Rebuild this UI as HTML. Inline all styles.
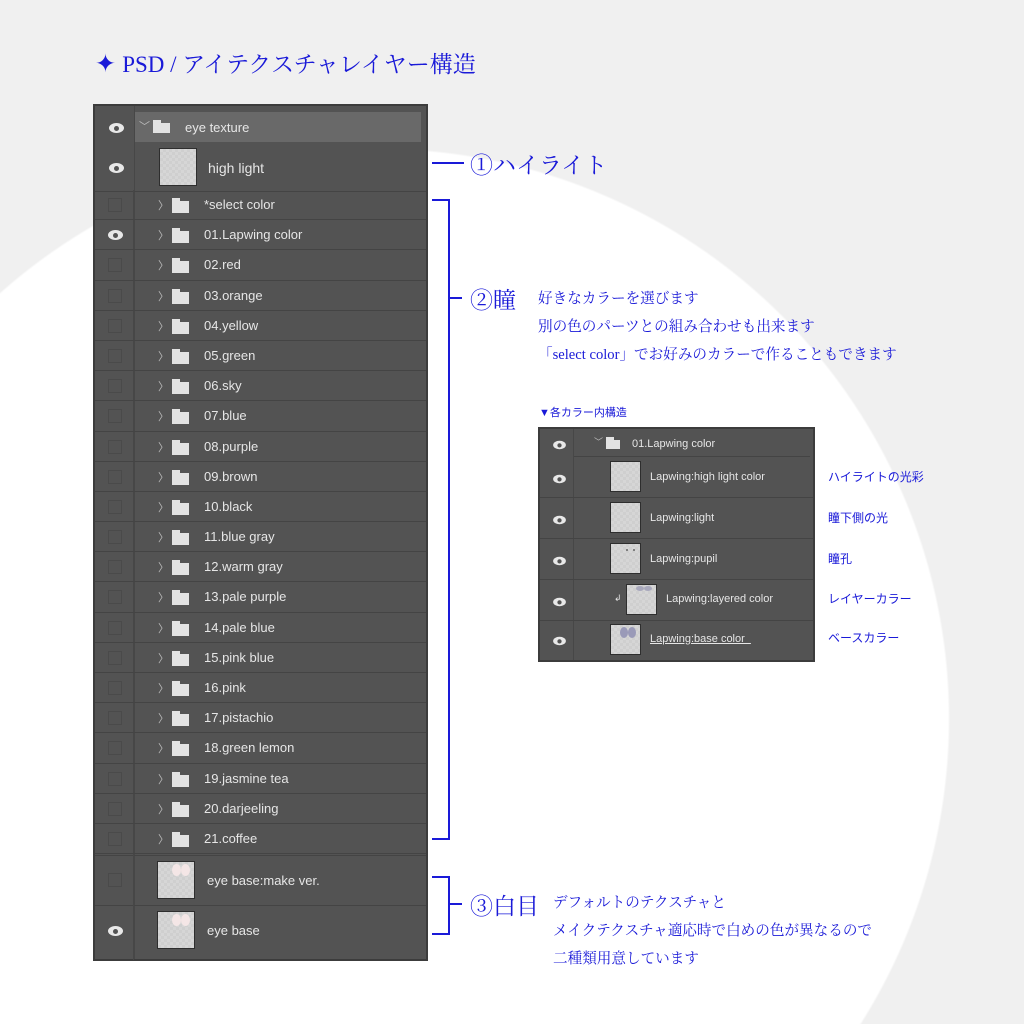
<!DOCTYPE html>
<html><head><meta charset="utf-8">
<style>
*{margin:0;padding:0;box-sizing:border-box}
html,body{width:1024px;height:1024px;overflow:hidden}
body{background:radial-gradient(circle 570px at 379px 719px,#fff 569px,#f0f0f0 571px);font-family:"Liberation Sans","Noto Sans CJK JP",sans-serif}
#wrap{position:relative;width:1024px;height:1024px;overflow:hidden}
.blue{color:#1a1ad8;font-family:"Liberation Serif","Noto Serif CJK JP",serif;position:absolute;white-space:nowrap}
.panel{position:absolute;background:#535353;border:2px solid #3c3c3c}
.row{position:absolute;left:0;right:0;border-bottom:1px solid #444}
.eyecol{position:absolute;left:0;top:0;bottom:0;border-right:1px solid #474747}
.txt{position:absolute;color:#e6e6e6;font-size:13px;white-space:nowrap}
.eye{position:absolute;width:15px;height:10px;border-radius:50%/50%;background:#e8e8e8}
.eye::after{content:"";position:absolute;left:5px;top:2.5px;width:5px;height:5px;border-radius:50%;background:#535353}
.box{position:absolute;width:14px;height:14px;border:1px solid #4a4a4a}
.chev{position:absolute;color:#bbb;font-size:11px}
.fold{position:absolute;width:17px;height:12px;background:#e2e2e2}
.fold::before{content:"";position:absolute;left:0;top:-3px;width:8px;height:3px;background:#e2e2e2}
.thumb{position:absolute;background:#d6d6d6;border:1px solid #2e2e2e;background-image:linear-gradient(45deg,#cfcfcf 25%,transparent 25%,transparent 75%,#cfcfcf 75%),linear-gradient(45deg,#cfcfcf 25%,transparent 25%,transparent 75%,#cfcfcf 75%);background-size:6px 6px;background-position:0 0,3px 3px}
.dot{position:absolute;border-radius:50%}
.ln{position:absolute;background:#1a1ad8}
.fr{position:relative;height:30.2px;border-bottom:1px solid #444}
.fr .box{left:13px;top:8px}
.fr .eye{left:13px;top:10px}
.fr .chev{left:63px;top:7px}
.fr .fold{left:77px;top:11px}
.fr .txt{left:109px;top:7px}
.sm{font-family:'Liberation Sans','Noto Sans CJK JP',sans-serif;font-size:12px}
</style></head><body><div id="wrap">

<div class="blue" style="left:95px;top:46px;font-size:25px;">✦ <span style="font-size:23px">PSD / アイテクスチャレイヤー構造</span></div>

<div class="panel" style="left:93px;top:104px;width:335px;height:857px;">
  <div class="eyecol" style="width:40px"></div>
  <div class="row" style="top:6px;height:30px;left:40px;right:5px;background:#696969;border:none"></div>
  <div class="eye" style="left:14px;top:17px"></div>
  <div class="chev" style="left:44px;top:12px">﹀</div>
  <div class="fold" style="left:58px;top:17px;height:10px"></div>
  <div class="txt" style="left:90px;top:14px">eye texture</div>
  <div class="row" style="top:36px;height:50px"></div>
  <div class="eye" style="left:14px;top:57px"></div>
  <div class="thumb" style="left:64px;top:42px;width:38px;height:38px"></div>
  <div class="txt" style="left:113px;top:54px;font-size:14px">high light</div>
</div>

<div style="position:absolute;left:95px;top:855px;width:331px;height:1px;background:#444"></div>
<div style="position:absolute;left:95px;top:905px;width:331px;height:1px;background:#444"></div>
<div class="box" style="left:108px;top:873px"></div>
<div class="thumb" style="left:157px;top:861px;width:38px;height:38px"></div>
<div class="dot" style="left:172px;top:864px;width:9px;height:12px;background:#f4e6e6"></div>
<div class="dot" style="left:181px;top:864px;width:9px;height:12px;background:#f4e6e6"></div>
<div class="txt" style="left:207px;top:873px">eye base:make ver.</div>
<div class="eye" style="left:108px;top:926px"></div>
<div class="thumb" style="left:157px;top:911px;width:38px;height:38px"></div>
<div class="dot" style="left:172px;top:914px;width:9px;height:12px;background:#f4e6e6"></div>
<div class="dot" style="left:181px;top:914px;width:9px;height:12px;background:#f4e6e6"></div>
<div class="txt" style="left:207px;top:923px">eye base</div>

<div class="ln" style="left:432px;top:162px;width:32px;height:2px"></div>
<div class="blue" style="left:470px;top:147px;font-size:23px">①ハイライト</div>

<div class="ln" style="left:432px;top:199px;width:18px;height:2px"></div>
<div class="ln" style="left:448px;top:199px;width:2px;height:641px"></div>
<div class="ln" style="left:432px;top:838px;width:18px;height:2px"></div>
<div class="ln" style="left:448px;top:297px;width:14px;height:2px"></div>
<div class="blue" style="left:470px;top:282px;font-size:23px">②瞳</div>
<div class="blue" style="left:538px;top:285px;font-size:14.6px;line-height:28px">好きなカラーを選びます<br>別の色のパーツとの組み合わせも出来ます<br>「select color」でお好みのカラーで作ることもできます</div>

<div class="ln" style="left:432px;top:876px;width:18px;height:2px"></div>
<div class="ln" style="left:448px;top:876px;width:2px;height:59px"></div>
<div class="ln" style="left:432px;top:933px;width:18px;height:2px"></div>
<div class="ln" style="left:448px;top:903px;width:14px;height:2px"></div>
<div class="blue" style="left:470px;top:888px;font-size:23px">③白目</div>
<div class="blue" style="left:553px;top:889px;font-size:14.6px;line-height:28px">デフォルトのテクスチャと<br>メイクテクスチャ適応時で白めの色が異なるので<br>二種類用意しています</div>

<div class="blue sm" style="left:539px;top:404px;font-size:11px">▼各カラー内構造</div>

<div class="panel" style="left:538px;top:427px;width:277px;height:235px;">
  <div class="eyecol" style="width:34px"></div>
  <div class="row" style="top:0;height:28px;left:34px;right:3px"></div>
  <div class="eye" style="left:12px;top:11px;transform:scale(.85)"></div>
  <div class="chev" style="left:54px;top:6px;font-size:9px">﹀</div>
  <div class="fold" style="left:66px;top:11px;width:14px;height:9px"></div>
  <div class="txt" style="left:92px;top:9px;font-size:11px">01.Lapwing color</div>
  <div class="row" style="top:28px;height:41px"></div>
  <div class="row" style="top:69px;height:41px"></div>
  <div class="row" style="top:110px;height:41px"></div>
  <div class="row" style="top:151px;height:41px"></div>
  <div class="eye" style="left:12px;top:45px;transform:scale(.85)"></div>
  <div class="eye" style="left:12px;top:86px;transform:scale(.85)"></div>
  <div class="eye" style="left:12px;top:127px;transform:scale(.85)"></div>
  <div class="eye" style="left:12px;top:168px;transform:scale(.85)"></div>
  <div class="eye" style="left:12px;top:207px;transform:scale(.85)"></div>
  <div class="thumb" style="left:70px;top:32px;width:31px;height:31px"></div>
  <div class="thumb" style="left:70px;top:73px;width:31px;height:31px"></div>
  <div class="thumb" style="left:70px;top:114px;width:31px;height:31px"></div>
  <div class="thumb" style="left:86px;top:155px;width:31px;height:31px"></div>
  <div class="thumb" style="left:70px;top:195px;width:31px;height:31px"></div>
  <div class="dot" style="left:86px;top:120px;width:2px;height:2px;background:#666"></div>
  <div class="dot" style="left:93px;top:120px;width:2px;height:2px;background:#666"></div>
  <div class="dot" style="left:96px;top:157px;width:8px;height:5px;background:#a8a8bc"></div>
  <div class="dot" style="left:104px;top:157px;width:8px;height:5px;background:#a8a8bc"></div>
  <div class="dot" style="left:80px;top:198px;width:8px;height:11px;background:#9a9ab8"></div>
  <div class="dot" style="left:88px;top:198px;width:8px;height:11px;background:#9a9ab8"></div>
  <div class="txt" style="left:110px;top:42px;font-size:11px">Lapwing:high light color</div>
  <div class="txt" style="left:110px;top:83px;font-size:11px">Lapwing:light</div>
  <div class="txt" style="left:110px;top:124px;font-size:11px">Lapwing:pupil</div>
  <div class="txt" style="left:74px;top:164px;font-size:9px">↲</div>
  <div class="txt" style="left:126px;top:164px;font-size:11px">Lapwing:layered color</div>
  <div class="txt" style="left:110px;top:204px;font-size:11px;text-decoration:underline">Lapwing:base color&nbsp;&nbsp;</div>
</div>
<div class="blue sm" style="left:828px;top:468px">ハイライトの光彩</div>
<div class="blue sm" style="left:828px;top:509px">瞳下側の光</div>
<div class="blue sm" style="left:828px;top:550px">瞳孔</div>
<div class="blue sm" style="left:828px;top:590px">レイヤーカラー</div>
<div class="blue sm" style="left:828px;top:629px">ベースカラー</div>

<div style="position:absolute;left:133px;top:190px;width:1px;height:770px;background:#474747"></div>
<div style="position:absolute;left:95px;top:190px;width:331px;">
<div class="fr"><div class="box"></div><div class="chev">〉</div><div class="fold"></div><div class="txt">*select color</div></div>
<div class="fr"><div class="eye"></div><div class="chev">〉</div><div class="fold"></div><div class="txt">01.Lapwing color</div></div>
<div class="fr"><div class="box"></div><div class="chev">〉</div><div class="fold"></div><div class="txt">02.red</div></div>
<div class="fr"><div class="box"></div><div class="chev">〉</div><div class="fold"></div><div class="txt">03.orange</div></div>
<div class="fr"><div class="box"></div><div class="chev">〉</div><div class="fold"></div><div class="txt">04.yellow</div></div>
<div class="fr"><div class="box"></div><div class="chev">〉</div><div class="fold"></div><div class="txt">05.green</div></div>
<div class="fr"><div class="box"></div><div class="chev">〉</div><div class="fold"></div><div class="txt">06.sky</div></div>
<div class="fr"><div class="box"></div><div class="chev">〉</div><div class="fold"></div><div class="txt">07.blue</div></div>
<div class="fr"><div class="box"></div><div class="chev">〉</div><div class="fold"></div><div class="txt">08.purple</div></div>
<div class="fr"><div class="box"></div><div class="chev">〉</div><div class="fold"></div><div class="txt">09.brown</div></div>
<div class="fr"><div class="box"></div><div class="chev">〉</div><div class="fold"></div><div class="txt">10.black</div></div>
<div class="fr"><div class="box"></div><div class="chev">〉</div><div class="fold"></div><div class="txt">11.blue gray</div></div>
<div class="fr"><div class="box"></div><div class="chev">〉</div><div class="fold"></div><div class="txt">12.warm gray</div></div>
<div class="fr"><div class="box"></div><div class="chev">〉</div><div class="fold"></div><div class="txt">13.pale purple</div></div>
<div class="fr"><div class="box"></div><div class="chev">〉</div><div class="fold"></div><div class="txt">14.pale blue</div></div>
<div class="fr"><div class="box"></div><div class="chev">〉</div><div class="fold"></div><div class="txt">15.pink blue</div></div>
<div class="fr"><div class="box"></div><div class="chev">〉</div><div class="fold"></div><div class="txt">16.pink</div></div>
<div class="fr"><div class="box"></div><div class="chev">〉</div><div class="fold"></div><div class="txt">17.pistachio</div></div>
<div class="fr"><div class="box"></div><div class="chev">〉</div><div class="fold"></div><div class="txt">18.green lemon</div></div>
<div class="fr"><div class="box"></div><div class="chev">〉</div><div class="fold"></div><div class="txt">19.jasmine tea</div></div>
<div class="fr"><div class="box"></div><div class="chev">〉</div><div class="fold"></div><div class="txt">20.darjeeling</div></div>
<div class="fr"><div class="box"></div><div class="chev">〉</div><div class="fold"></div><div class="txt">21.coffee</div></div>
</div>
</div></body></html>
